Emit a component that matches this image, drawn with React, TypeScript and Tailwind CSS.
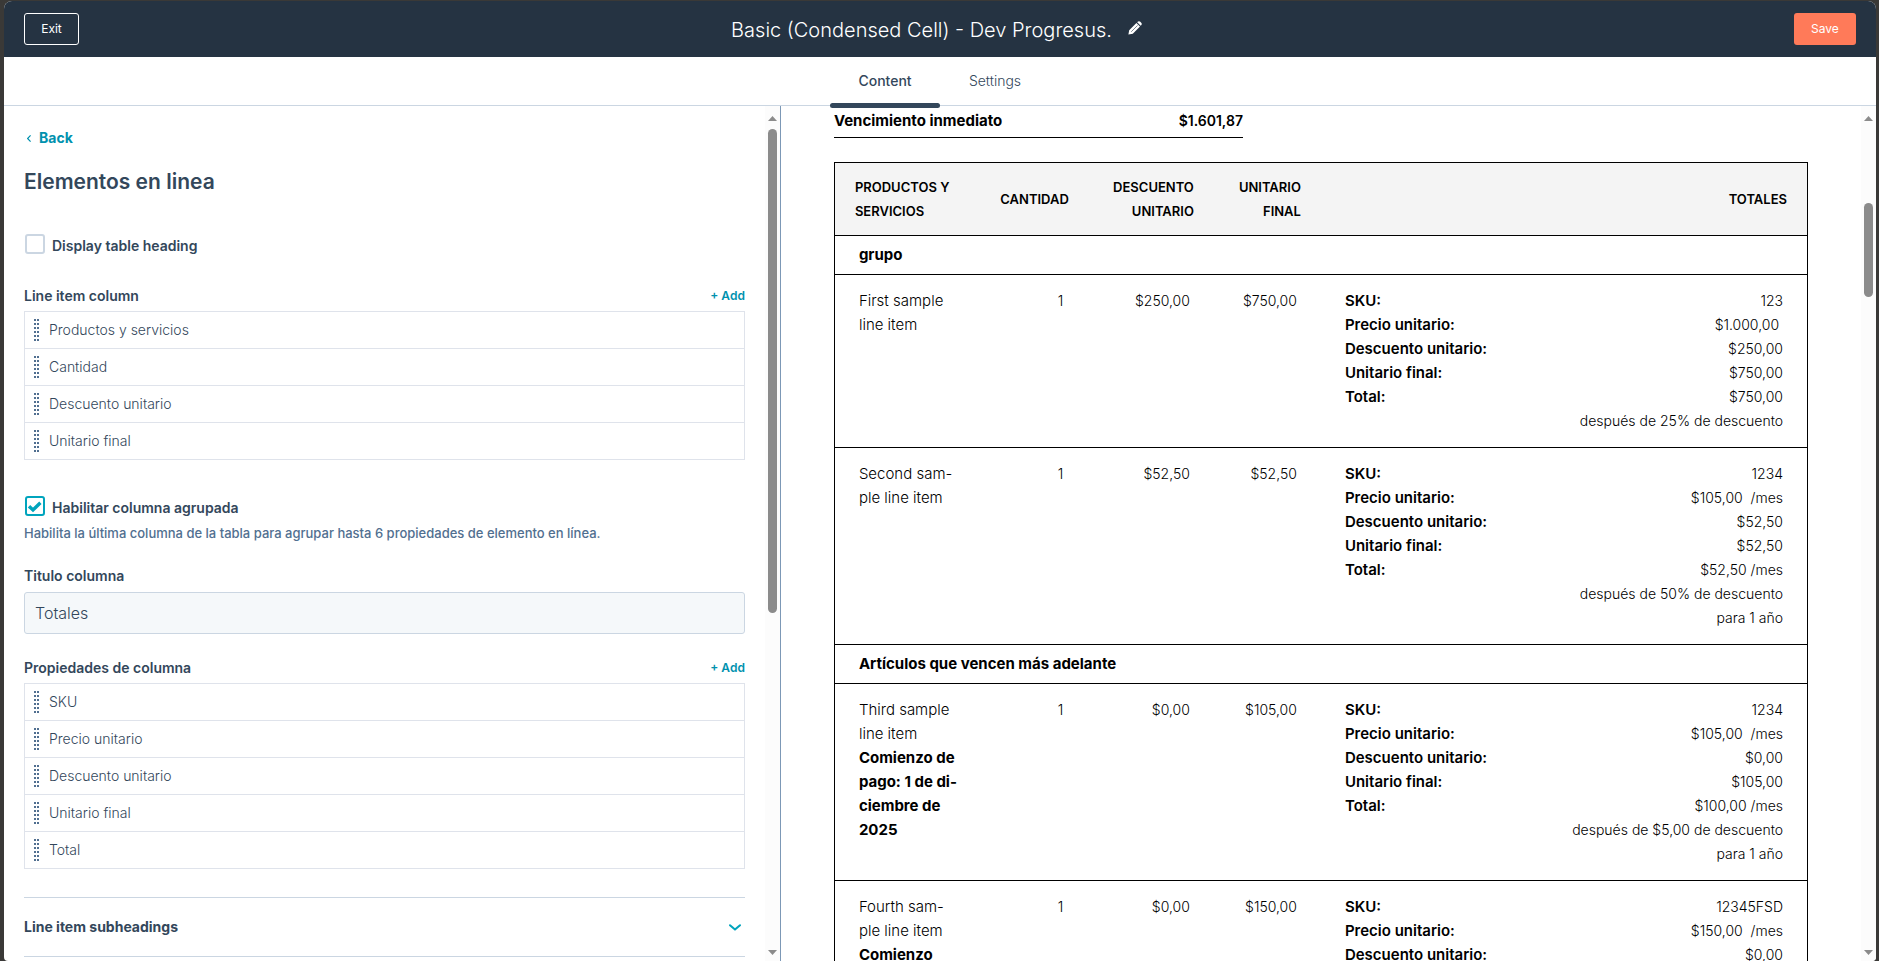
import { useState } from "react";

type Detail = [label: string, value: string];

type LineItem = {
  name: string[];
  start?: string[];
  quantity: string;
  discount: string;
  finalPrice: string;
  details: Detail[];
  notes: string[];
};

const lineColumns = [
  "Productos y servicios",
  "Cantidad",
  "Descuento unitario",
  "Unitario final",
];

const groupedColumns = [
  "SKU",
  "Precio unitario",
  "Descuento unitario",
  "Unitario final",
  "Total",
];

const dueNow: LineItem[] = [
  {
    name: ["First sample", "line item"],
    quantity: "1",
    discount: "$250,00",
    finalPrice: "$750,00",
    details: [
      ["SKU:", "123"],
      ["Precio unitario:", "$1.000,00\u00a0"],
      ["Descuento unitario:", "$250,00"],
      ["Unitario final:", "$750,00"],
      ["Total:", "$750,00"],
    ],
    notes: ["después de 25% de descuento"],
  },
  {
    name: ["Second sam-", "ple line item"],
    quantity: "1",
    discount: "$52,50",
    finalPrice: "$52,50",
    details: [
      ["SKU:", "1234"],
      ["Precio unitario:", "$105,00\u00a0 /mes"],
      ["Descuento unitario:", "$52,50"],
      ["Unitario final:", "$52,50"],
      ["Total:", "$52,50 /mes"],
    ],
    notes: ["después de 50% de descuento", "para 1 año"],
  },
];

const dueLater: LineItem[] = [
  {
    name: ["Third sample", "line item"],
    start: ["Comienzo de", "pago: 1 de di-", "ciembre de", "2025"],
    quantity: "1",
    discount: "$0,00",
    finalPrice: "$105,00",
    details: [
      ["SKU:", "1234"],
      ["Precio unitario:", "$105,00\u00a0 /mes"],
      ["Descuento unitario:", "$0,00"],
      ["Unitario final:", "$105,00"],
      ["Total:", "$100,00 /mes"],
    ],
    notes: ["después de $5,00 de descuento", "para 1 año"],
  },
  {
    name: ["Fourth sam-", "ple line item"],
    start: ["Comienzo"],
    quantity: "1",
    discount: "$0,00",
    finalPrice: "$150,00",
    details: [
      ["SKU:", "12345FSD"],
      ["Precio unitario:", "$150,00\u00a0 /mes"],
      ["Descuento unitario:", "$0,00"],
    ],
    notes: [],
  },
];

function PencilIcon() {
  return (
    <svg viewBox="0 0 14 14" className="size-3.5" aria-hidden="true">
      <path
        fill="currentColor"
        d="M0.4 13.6 1.2 9.2 8.4 2 12 5.6 4.8 12.8ZM9.2 1.3 10 .6Q11.2-.2 12.3.8L13.2 1.7Q14.2 2.8 13.4 4L12.7 4.8Z"
      />
      <path stroke="#253342" strokeWidth="0.6" d="M3.2 10.8 9.6 4.4" />
    </svg>
  );
}

function DragHandle() {
  return (
    <svg
      viewBox="0 0 5 22"
      className="h-[22px] w-[5px] shrink-0 text-[#516f90]"
      fill="currentColor"
      shapeRendering="crispEdges"
      aria-hidden="true"
    >
      {[0, 4, 8, 12, 16, 20].map((y) => (
        <g key={y}>
          <rect x="0" y={y} width="2" height="2" />
          <rect x="3" y={y} width="2" height="2" />
        </g>
      ))}
    </svg>
  );
}

function Scrollbar({ thumb }: { thumb: string }) {
  return (
    <div
      className="flex w-[15px] shrink-0 flex-col items-center bg-[#fcfcfc] pt-2.5 pb-1.5 text-[#8b8b8b]"
      aria-hidden="true"
    >
      <svg viewBox="0 0 9 5" className="h-[5px] w-[9px] shrink-0" fill="currentColor">
        <path d="M0 5 4.5 0 9 5Z" />
      </svg>
      <div className="flex min-h-0 w-[9px] flex-1 flex-col pt-2">
        <div className={`w-full rounded-full bg-[#8b8b8b] ${thumb}`} />
      </div>
      <svg viewBox="0 0 9 5" className="h-[5px] w-[9px] shrink-0" fill="currentColor">
        <path d="M0 0 4.5 5 9 0Z" />
      </svg>
    </div>
  );
}

function Checkbox({
  id,
  label,
  checked,
  onChange,
}: {
  id: string;
  label: string;
  checked: boolean;
  onChange: (value: boolean) => void;
}) {
  return (
    <div className="flex h-6 items-center gap-[7px] pl-px">
      <span className="grid shrink-0">
        <input
          id={id}
          type="checkbox"
          checked={checked}
          onChange={(e) => onChange(e.target.checked)}
          className="col-start-1 row-start-1 size-5 appearance-none rounded-[3px] border-2 border-[#cbd6e2] bg-white checked:border-[#00a4bd]"
        />
        {checked && (
          <svg
            viewBox="0 0 20 20"
            className="pointer-events-none col-start-1 row-start-1 size-5 text-[#00a4bd]"
            fill="none"
            stroke="currentColor"
            strokeWidth="3.4"
            aria-hidden="true"
          >
            <path d="M4 10.2 8 14 15.4 6.8" />
          </svg>
        )}
      </span>
      <label htmlFor={id} className="pt-1 text-sm font-semibold">
        {label}
      </label>
    </div>
  );
}

function ColumnList({ title, columns }: { title: string; columns: string[] }) {
  return (
    <section>
      <div className="flex h-6 items-center justify-between">
        <h2 className="text-sm font-semibold">{title}</h2>
        <button type="button" className="text-xs font-semibold text-[#0091ae]">
          + Add
        </button>
      </div>
      <ul className="mt-[3px] border border-[#dfe3eb]">
        {columns.map((column) => (
          <li
            key={column}
            className="flex h-[37px] items-center gap-2.5 border-b border-[#dfe3eb] px-[9px] text-sm font-light last:h-9 last:border-b-0"
          >
            <DragHandle />
            {column}
          </li>
        ))}
      </ul>
    </section>
  );
}

function GroupRow({ title }: { title: string }) {
  return (
    <tr className="border-b border-black">
      <th colSpan={5} scope="colgroup" className="px-6 py-[7px] text-left text-[15px] leading-6 font-bold">
        {title}
      </th>
    </tr>
  );
}

function ItemRow({ item }: { item: LineItem }) {
  return (
    <tr className="border-b border-black align-top">
      <td className="py-3.5 pl-6 text-[15px] leading-6 whitespace-nowrap">
        {item.name.map((line) => (
          <div key={line}>{line}</div>
        ))}
        {item.start?.map((line) => (
          <div key={line} className="font-bold">
            {line}
          </div>
        ))}
      </td>
      <td className="px-6 py-3.5 text-right">{item.quantity}</td>
      <td className="px-6 py-3.5 text-right">{item.discount}</td>
      <td className="px-6 py-3.5 text-right">{item.finalPrice}</td>
      <td className="px-6 py-3.5">
        {item.details.map(([label, value]) => (
          <div key={label} className="flex justify-between">
            <span className="text-[15px] leading-6 font-semibold">{label}</span>
            <span>{value}</span>
          </div>
        ))}
        {item.notes.map((note) => (
          <div key={note} className="text-right">
            {note}
          </div>
        ))}
      </td>
    </tr>
  );
}

export default function App() {
  const [heading, setHeading] = useState(false);
  const [grouped, setGrouped] = useState(true);
  const [columnTitle, setColumnTitle] = useState("Totales");

  return (
    <div className="h-screen bg-[#3a3937] pt-px pr-[3px] pl-1 font-['Inter',sans-serif] text-[#33475b]">
      <div className="flex h-full flex-col overflow-hidden rounded-t-lg rounded-b-sm bg-white">
        {/* Top bar */}
        <header className="flex items-center justify-between bg-[#253342] px-5 py-3 text-white">
          <button type="button" className="h-8 w-[55px] rounded-[3px] border border-white text-xs">
            Exit
          </button>
          <div className="flex items-center gap-4">
            <h1 className="pt-0.5 text-xl font-light">Basic (Condensed Cell) - Dev Progresus.</h1>
            <button type="button" aria-label="Edit name" className="pb-0.5">
              <PencilIcon />
            </button>
          </div>
          <button type="button" className="h-8 w-[62px] rounded-[3px] bg-[#ff7a59] text-xs">
            Save
          </button>
        </header>

        {/* Tabs */}
        <nav className="flex h-[49px] shrink-0 justify-center border-b border-[#cbd6e2] text-sm">
          <a href="#content" className="relative flex w-[110px] items-center justify-center font-medium">
            Content
            <span className="absolute inset-x-0 -bottom-[3px] z-10 h-[5px] rounded-full bg-[#33475b]" />
          </a>
          <a href="#settings" className="flex w-[110px] items-center justify-center font-light">
            Settings
          </a>
        </nav>

        <main className="flex min-h-0 flex-1">
          {/* Editor */}
          <aside className="flex w-[41.5%] shrink-0 border-r border-[#7c98b6]">
            <div className="min-w-0 flex-1 overflow-hidden px-5 pt-5">
              <a
                href="#back"
                className="flex h-6 items-center gap-2 pl-[3px] text-sm font-bold text-[#0091ae]"
              >
                <svg viewBox="0 0 4 7" className="h-[7px] w-1" fill="none" stroke="currentColor" strokeWidth="1.2" aria-hidden="true">
                  <path d="M3.6.4.6 3.5 3.6 6.6" />
                </svg>
                Back
              </a>
              <h2 className="mt-4 text-[21px] leading-8 font-semibold">Elementos en linea</h2>

              <div className="mt-[34px]">
                <Checkbox id="heading" label="Display table heading" checked={heading} onChange={setHeading} />
              </div>

              <div className="mt-7">
                <ColumnList title="Line item column" columns={lineColumns} />
              </div>

              <div className="mt-[34px]">
                <Checkbox id="grouped" label="Habilitar columna agrupada" checked={grouped} onChange={setGrouped} />
                <p className="mt-1 text-[13px] leading-[22px] font-medium text-[#516f90]">
                  Habilita la última columna de la tabla para agrupar hasta 6 propiedades de elemento en línea.
                </p>
              </div>

              <div className="mt-5">
                <label htmlFor="column-title" className="flex h-6 items-center text-sm font-semibold">
                  Titulo columna
                </label>
                <input
                  id="column-title"
                  type="text"
                  value={columnTitle}
                  onChange={(e) => setColumnTitle(e.target.value)}
                  className="mt-1 block h-[42px] w-full rounded-[3px] border border-[#cbd6e2] bg-[#f5f8fa] px-2.5 text-base font-light"
                />
              </div>

              <div className="mt-[22px]">
                <ColumnList title="Propiedades de columna" columns={groupedColumns} />
              </div>

              <div className="mt-7 border-y border-[#cbd6e2]">
                <button
                  type="button"
                  className="flex h-[58px] w-full items-center justify-between pr-1 text-sm font-bold"
                >
                  Line item subheadings
                  <svg
                    viewBox="0 0 12 7"
                    className="h-[7px] w-3 text-[#00a4bd]"
                    fill="none"
                    stroke="currentColor"
                    strokeWidth="2"
                    strokeLinecap="round"
                    strokeLinejoin="round"
                    aria-hidden="true"
                  >
                    <path d="M1 1.2 6 5.6 11 1.2" />
                  </svg>
                </button>
              </div>
            </div>
            <Scrollbar thumb="h-[59%]" />
          </aside>

          {/* Quote preview */}
          <section className="min-w-0 flex-1 overflow-hidden px-[53px] text-sm leading-6 font-light text-black">
            <div className="flex w-[42%] justify-between border-b border-black pt-[3px] pb-1 font-semibold">
              <span className="text-[15px] leading-6 font-bold">Vencimiento inmediato</span>
              <span>$1.601,87</span>
            </div>

            <table className="mt-6 w-full table-fixed border-collapse border border-black">
              <thead>
                <tr className="border-b border-black bg-[#f4f4f4] text-[13px] leading-6">
                  <th scope="col" className="w-[15%] px-5 py-3 text-left font-semibold">
                    PRODUCTOS Y
                    <br />
                    SERVICIOS
                  </th>
                  <th scope="col" className="w-[11%] px-5 py-3 text-right font-semibold">
                    CANTIDAD
                  </th>
                  <th scope="col" className="w-[13%] px-5 py-3 text-right font-semibold">
                    DESCUENTO
                    <br />
                    UNITARIO
                  </th>
                  <th scope="col" className="w-[11%] px-5 py-3 text-right font-semibold">
                    UNITARIO
                    <br />
                    FINAL
                  </th>
                  <th scope="col" className="w-[50%] px-5 py-3 text-right font-semibold">
                    TOTALES
                  </th>
                </tr>
              </thead>
              <tbody>
                <GroupRow title="grupo" />
                {dueNow.map((item) => (
                  <ItemRow key={item.name[0]} item={item} />
                ))}
                <GroupRow title="Artículos que vencen más adelante" />
                {dueLater.map((item) => (
                  <ItemRow key={item.name[0]} item={item} />
                ))}
              </tbody>
            </table>
          </section>
          <Scrollbar thumb="mt-[74px] h-[94px]" />
        </main>
      </div>
    </div>
  );
}
